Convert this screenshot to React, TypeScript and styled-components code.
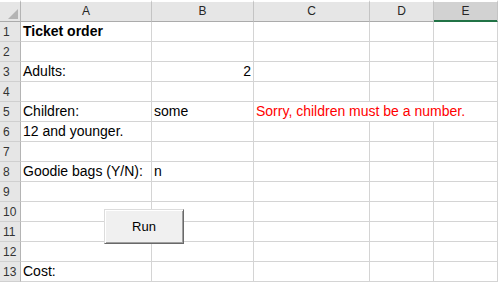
import React from 'react'
import styled, { createGlobalStyle } from 'styled-components'

const GlobalStyle = createGlobalStyle`
	html, body {
		margin: 0;
		padding: 0;
		background: #fff;
	}

	body {
		font-family: 'Liberation Sans', Arial, sans-serif;
		overflow: hidden;
	}
`

type CellData = {
	text: string
	bold?: boolean
	right?: boolean
	color?: string
	span?: number
}

const columns = [
	{ name: 'A', width: 131 },
	{ name: 'B', width: 102 },
	{ name: 'C', width: 116 },
	{ name: 'D', width: 64 },
	{ name: 'E', width: 64, selected: true },
]

const rows: Record<number, Record<string, CellData>> = {
	1: { A: { text: 'Ticket order', bold: true } },
	3: { A: { text: 'Adults:' }, B: { text: '2', right: true } },
	5: {
		A: { text: 'Children:' },
		B: { text: 'some' },
		C: { text: 'Sorry, children must be a number.', color: '#f00', span: 3 },
	},
	6: { A: { text: '12 and younger.' } },
	8: { A: { text: 'Goodie bags (Y/N):' }, B: { text: 'n' } },
	13: { A: { text: 'Cost:' } },
}

const Sheet = styled.div`
	position: relative;
	display: grid;
	grid-template-columns: 21px ${columns.map((c) => `${c.width}px`).join(' ')};
	grid-template-rows: 22px repeat(13, 20px);
	width: 498px;
	height: 282px;
`

const Corner = styled.div`
	position: relative;
	box-sizing: border-box;
	background: #e6e6e6;
	border-top: 2px solid #fff;
	border-right: 1px solid #b4b4b4;
	border-bottom: 1px solid #ababab;

	&::after {
		content: '';
		position: absolute;
		right: 2px;
		bottom: 2px;
		border-left: 10px solid transparent;
		border-bottom: 10px solid #b4b4b4;
	}
`

const ColumnHeader = styled.div<{ $selected?: boolean }>`
	box-sizing: border-box;
	background: ${(p) => (p.$selected ? '#d2d2d2' : '#e6e6e6')};
	border-top: 2px solid #fff;
	border-right: 1px solid #c4c4c4;
	border-bottom: 1px solid ${(p) => (p.$selected ? '#217346' : '#ababab')};
	box-shadow: ${(p) => (p.$selected ? 'inset 0 -1px 0 #217346' : 'none')};
	color: #262626;
	font-size: 12px;
	line-height: 19px;
	text-align: center;
`

const RowHeader = styled.div`
	box-sizing: border-box;
	background: #e6e6e6;
	border-right: 1px solid #b4b4b4;
	border-bottom: 1px solid #d0d0d0;
	color: #333;
	font-size: 12px;
	line-height: 19px;
	padding: 1px 0 0 3px;
`

const Cell = styled.div<{ $span?: number; $right?: boolean; $bold?: boolean; $color?: string }>`
	box-sizing: border-box;
	grid-column: span ${(p) => p.$span || 1};
	border-right: 1px solid #d4d4d4;
	border-bottom: 1px solid #d4d4d4;
	padding: 0 2px;
	font-size: 14px;
	line-height: 19px;
	font-weight: ${(p) => (p.$bold ? 'bold' : 'normal')};
	color: ${(p) => p.$color || '#000'};
	text-align: ${(p) => (p.$right ? 'right' : 'left')};
	white-space: nowrap;
`

const RunButton = styled.button`
	position: absolute;
	left: 104px;
	top: 209px;
	width: 80px;
	height: 35px;
	box-sizing: border-box;
	background: #f0f0f0;
	border: 1px solid;
	border-color: #dcdcdc #696969 #696969 #dcdcdc;
	box-shadow: inset 1px 1px 0 #fff, inset -1px -1px 0 #a0a0a0;
	font-family: 'Liberation Sans', Arial, sans-serif;
	font-size: 13px;
	color: #000;
	padding: 0;
`

export default function App() {
	const rowNumbers = Array.from({ length: 13 }, (_, i) => i + 1)

	return (
		<>
			<GlobalStyle />
			<Sheet>
				<Corner />
				{columns.map((col) => (
					<ColumnHeader key={col.name} $selected={col.selected}>
						{col.name}
					</ColumnHeader>
				))}
				{rowNumbers.map((n) => {
					const data = rows[n] || {}
					let skip = 0
					return (
						<React.Fragment key={n}>
							<RowHeader>{n}</RowHeader>
							{columns.map((col) => {
								if (skip > 0) {
									skip--
									return null
								}
								const cell = data[col.name]
								if (cell?.span) skip = cell.span - 1
								return (
									<Cell
										key={col.name}
										$span={cell?.span}
										$right={cell?.right}
										$bold={cell?.bold}
										$color={cell?.color}
									>
										{cell?.text}
									</Cell>
								)
							})}
						</React.Fragment>
					)
				})}
				<RunButton>Run</RunButton>
			</Sheet>
		</>
	)
}
